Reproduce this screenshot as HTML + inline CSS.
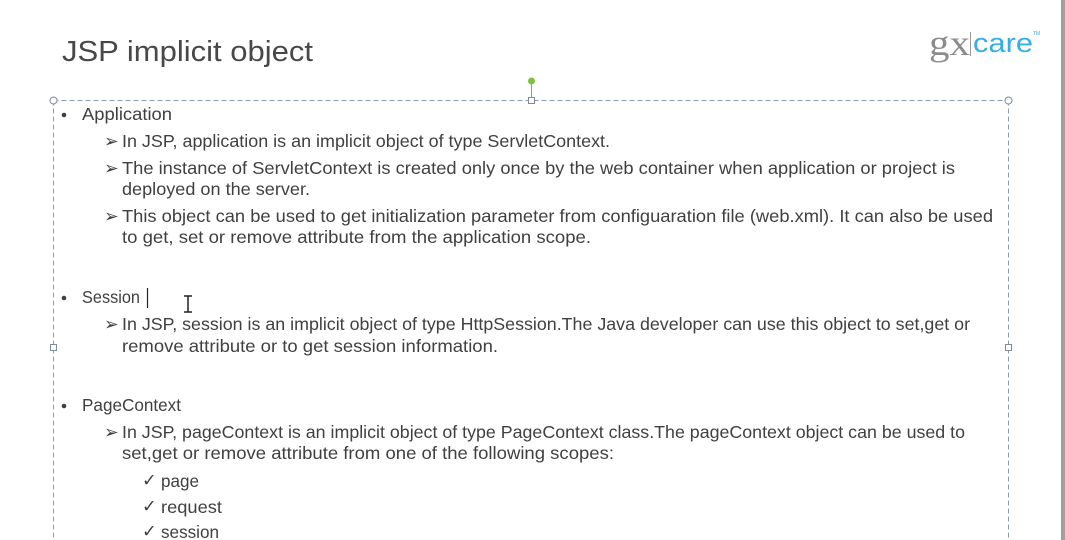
<!DOCTYPE html>
<html><head><meta charset="utf-8"><style>
html,body{margin:0;padding:0;background:#fff;width:1065px;height:540px;overflow:hidden}
svg{display:block}
text{font-family:"Liberation Sans",sans-serif;fill:#404040}
.b text{font-size:17.5px}
</style></head><body>
<svg width="1065" height="540" viewBox="0 0 1065 540">
<rect x="0" y="0" width="1065" height="540" fill="#fff"/>
<rect x="1061" y="0" width="4" height="540" fill="#a0a0a0"/>
<text x="62" y="61" font-size="29" style="fill:#484848" textLength="251" lengthAdjust="spacingAndGlyphs">JSP implicit object</text>
<!-- logo -->
<text x="929" y="55" font-size="36" style="font-family:'Liberation Serif',serif;fill:#8c8c8c" textLength="41" lengthAdjust="spacingAndGlyphs">gx</text>
<line x1="970.5" y1="32" x2="970.5" y2="56" stroke="#999" stroke-width="1"/>
<text x="973" y="52" font-size="27" style="fill:#35aee8" textLength="60" lengthAdjust="spacingAndGlyphs">care</text>
<text x="1033" y="35" font-size="5" style="fill:#35aee8">TM</text>
<!-- selection box -->
<g stroke="#8a9bb0" stroke-width="1" fill="none" stroke-dasharray="5,3">
<line x1="53.5" y1="100.5" x2="1008.5" y2="100.5"/>
<line x1="53.5" y1="100.5" x2="53.5" y2="540"/>
<line x1="1008.5" y1="100.5" x2="1008.5" y2="540"/>
</g>
<line x1="531.5" y1="84" x2="531.5" y2="98" stroke="#8a9bb0"/>
<circle cx="531.5" cy="81" r="3.5" fill="#7dc142"/>
<g fill="#fff" stroke="#7f8c9a">
<circle cx="53.5" cy="100.5" r="3.5"/><circle cx="1008.5" cy="100.5" r="3.5"/>
<rect x="528.5" y="97.5" width="6" height="6"/>
<rect x="50.5" y="344.5" width="6" height="6"/><rect x="1005.5" y="344.5" width="6" height="6"/>
</g>
<g class="b">
<circle cx="64" cy="115" r="2.3" fill="#404040"/>
<text x="82" y="120" textLength="90" lengthAdjust="spacingAndGlyphs">Application</text>
<text x="104" y="147">➢</text><text x="122" y="147" textLength="488" lengthAdjust="spacingAndGlyphs">In JSP, application is an implicit object of type ServletContext.</text>
<text x="104" y="174">➢</text><text x="122" y="174" textLength="833" lengthAdjust="spacingAndGlyphs">The instance of ServletContext  is created only once by the web container when application or project is</text>
<text x="122" y="195" textLength="188" lengthAdjust="spacingAndGlyphs">deployed on the server.</text>
<text x="104" y="222">➢</text><text x="122" y="222" textLength="871" lengthAdjust="spacingAndGlyphs">This object can be used to get initialization parameter from configuaration file (web.xml). It can also be used</text>
<text x="122" y="243" textLength="469" lengthAdjust="spacingAndGlyphs">to get, set or remove attribute from the application scope.</text>
<circle cx="64" cy="298" r="2.3" fill="#404040"/>
<text x="82" y="303" textLength="58" lengthAdjust="spacingAndGlyphs">Session</text>
<line x1="147.5" y1="288" x2="147.5" y2="308" stroke="#222" stroke-width="1.2"/>
<path d="M184 296h8M188 296v16M184 312h8" stroke="#222" stroke-width="1.5" fill="none"/>
<text x="104" y="330">➢</text><text x="122" y="330" textLength="848" lengthAdjust="spacingAndGlyphs">In JSP, session is an implicit object of type HttpSession.The Java developer can use this object to set,get or</text>
<text x="122" y="352" textLength="376" lengthAdjust="spacingAndGlyphs">remove attribute or to get session information.</text>
<circle cx="64" cy="406" r="2.3" fill="#404040"/>
<text x="82" y="411" textLength="99" lengthAdjust="spacingAndGlyphs">PageContext</text>
<text x="104" y="438">➢</text><text x="122" y="438" textLength="843" lengthAdjust="spacingAndGlyphs">In JSP, pageContext is an implicit object of type PageContext class.The pageContext object can be used to</text>
<text x="122" y="459" textLength="492" lengthAdjust="spacingAndGlyphs">set,get or remove attribute from one of the following scopes:</text>
<text x="142" y="486">✓</text><text x="161" y="487" textLength="38" lengthAdjust="spacingAndGlyphs">page</text>
<text x="142" y="512">✓</text><text x="161" y="513" textLength="61" lengthAdjust="spacingAndGlyphs">request</text>
<text x="142" y="537">✓</text><text x="161" y="538" textLength="58" lengthAdjust="spacingAndGlyphs">session</text>
</g>
</svg>
</body></html>
